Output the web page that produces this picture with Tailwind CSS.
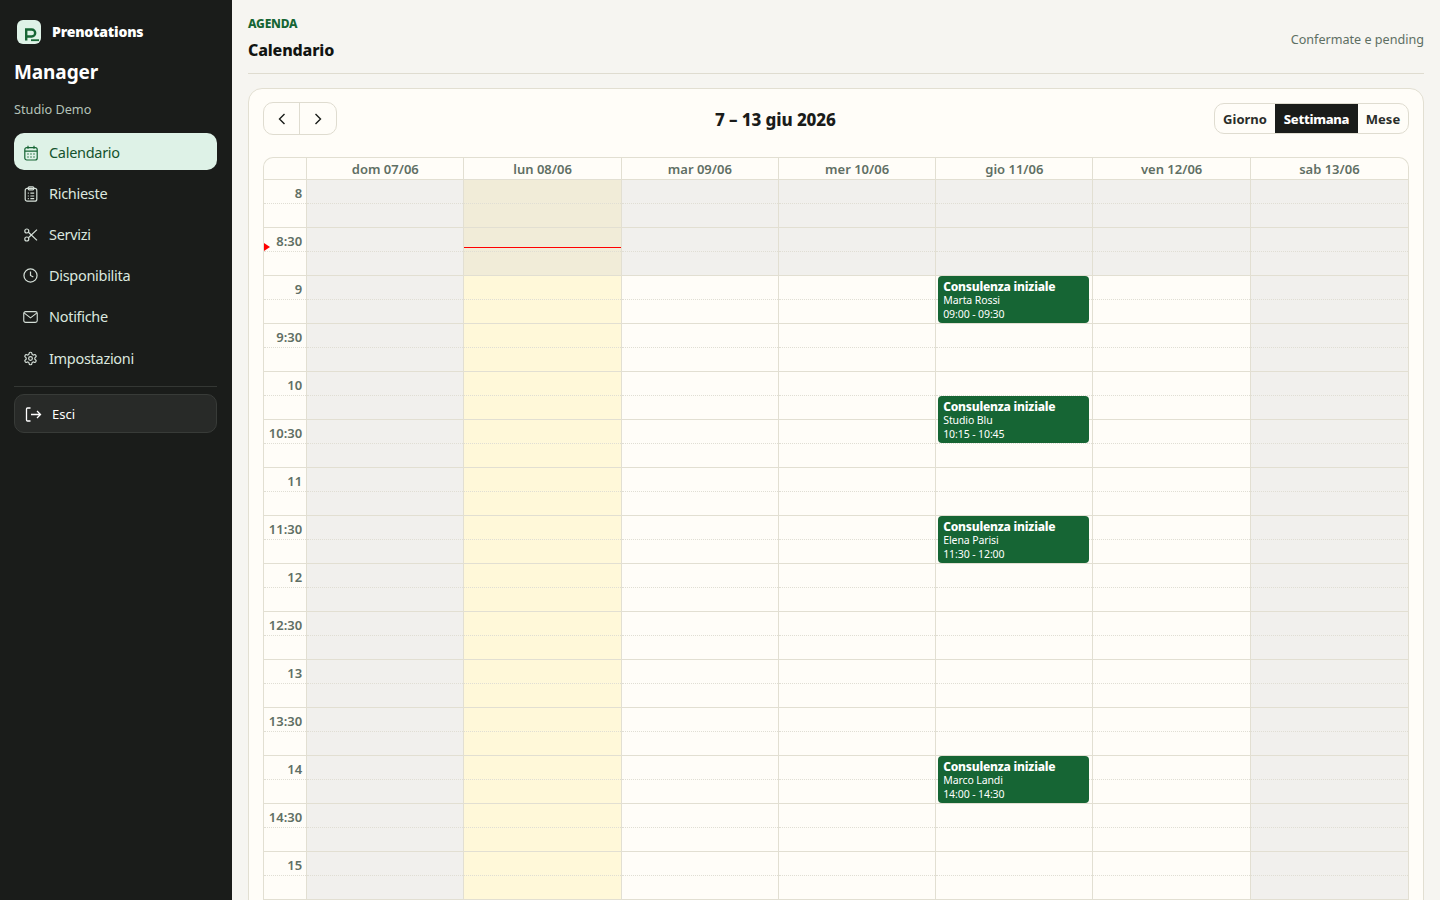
<!DOCTYPE html>
<html lang="en">
<head>
  <meta charset="UTF-8" />
  <meta name="viewport" content="width=device-width, initial-scale=1.0"/>
  <title>Calendario</title>
  <script src="https://cdn.jsdelivr.net/npm/@tailwindcss/browser@4"></script>
</head>

<body class="h-screen overflow-hidden flex bg-[#f6f5f1] font-['Noto_Sans',sans-serif]">
  <!-- Sidebar -->
  <aside class="w-[232px] shrink-0 bg-[#1a1c1a] pl-[14px] pr-[15px] pt-[19px]">
    <div class="flex items-center gap-[11px] pl-[3px] h-[25px]">
      <svg class="w-[24px] h-[24px]" viewBox="0 0 24 24">
        <rect width="24" height="24" rx="6" fill="#def2e7"/>
        <path d="M9.200 20.500V9.500h5.500a3.500 3.500 0 0 1 0 7H9.200" fill="none" stroke="#166534" stroke-width="2.400"/>
        <path d="M14 20.200h8" stroke="#166534" stroke-width="1.800"/>
      </svg>
      <span class="text-[14px] font-black tracking-[-0.2px] text-white">Prenotations</span>
    </div>
    <div class="mt-[13px] text-[19px] leading-[30px] font-bold tracking-[-0.1px] text-white">Manager</div>
    <div class="mt-[13px] text-[12.700px] leading-[18px] text-[#b4c2b8]">Studio Demo</div>

    <nav class="mt-[15px] flex flex-col gap-[4px] text-[14.500px] tracking-[-0.3px]">
      <a class="h-[37px] pt-[2px] flex items-center gap-[11px] pl-[10px] rounded-[10px] bg-[#def2e7] text-[#14532d]">
        <svg class="w-[14px] h-[16px]" viewBox="0 0 14 16" fill="none" stroke="#166534" stroke-width="1.200"><rect x=".8" y="2.600" width="12.400" height="12.400" rx="2"/><path d="M.8 6.200h12.400M4 .8v3M10 .8v3"/><path d="M3.500 9h1M6.500 9h1M9.500 9h1M3.500 12h1M6.500 12h1M9.500 12h1" stroke-width="1.300"/></svg>
        Calendario
      </a>
      <a class="h-[37px] pt-[2px] flex items-center gap-[11px] pl-[10px] rounded-[10px] text-[#dbe7df]">
        <svg class="w-[14px] h-[16px]" viewBox="0 0 14 16" fill="none" stroke="#d5dfd8" stroke-width="1.200"><rect x="1.200" y="2.400" width="11.600" height="12.800" rx="2"/><rect x="4.200" y=".8" width="5.600" height="3" rx="1"/><path d="M3.800 7.200h1M6.400 7.200h3.800M3.800 10h1M6.400 10h3.800M3.800 12.600h1M6.400 12.600h3.800"/></svg>
        Richieste
      </a>
      <a class="h-[37px] pt-[2px] flex items-center gap-[11px] pl-[10px] rounded-[10px] text-[#dbe7df]">
        <svg class="w-[14px] h-[14px]" viewBox="0 0 14 14" fill="none" stroke="#d5dfd8" stroke-width="1.200"><circle cx="2.800" cy="3" r="2"/><circle cx="2.800" cy="11" r="2"/><path d="M4.400 4.200 13 12.400M4.400 9.800 13 1.600"/></svg>
        Servizi
      </a>
      <a class="h-[37px] pt-[2px] flex items-center gap-[11px] pl-[9px] rounded-[10px] text-[#dbe7df]">
        <svg class="w-[15px] h-[15px]" viewBox="0 0 16 16" fill="none" stroke="#d5dfd8" stroke-width="1.300"><circle cx="8" cy="8" r="7"/><path d="M8 3.800V8l3 1.600"/></svg>
        Disponibilita
      </a>
      <a class="h-[37px] pt-[2px] flex items-center gap-[11px] pl-[9px] rounded-[10px] text-[#dbe7df]">
        <svg class="w-[15px] h-[12px]" viewBox="0 0 16 13" fill="none" stroke="#d5dfd8" stroke-width="1.200"><rect x=".7" y=".7" width="14.600" height="11.600" rx="2"/><path d="m1 2 7 5.400L15 2"/></svg>
        Notifiche
      </a>
      <a class="h-[37px] pt-[2px] mt-[1px] flex items-center gap-[11px] pl-[9px] rounded-[10px] text-[#dbe7df]">
        <svg class="w-[15px] h-[15px]" viewBox="0 0 24 24" fill="none" stroke="#d5dfd8" stroke-width="1.900"><path d="M12.220 2h-.44a2 2 0 0 0-2 2v.18a2 2 0 0 1-1 1.730l-.43.25a2 2 0 0 1-2 0l-.15-.08a2 2 0 0 0-2.730.73l-.22.38a2 2 0 0 0 .73 2.730l.15.1a2 2 0 0 1 1 1.720v.51a2 2 0 0 1-1 1.740l-.15.09a2 2 0 0 0-.73 2.730l.22.38a2 2 0 0 0 2.730.73l.15-.08a2 2 0 0 1 2 0l.43.25a2 2 0 0 1 1 1.730V20a2 2 0 0 0 2 2h.44a2 2 0 0 0 2-2v-.18a2 2 0 0 1 1-1.730l.43-.25a2 2 0 0 1 2 0l.15.08a2 2 0 0 0 2.730-.73l.22-.39a2 2 0 0 0-.73-2.730l-.15-.08a2 2 0 0 1-1-1.740v-.5a2 2 0 0 1 1-1.740l.15-.09a2 2 0 0 0 .73-2.730l-.22-.38a2 2 0 0 0-2.730-.73l-.15.08a2 2 0 0 1-2 0l-.43-.25a2 2 0 0 1-1-1.730V4a2 2 0 0 0-2-2z"/><circle cx="12" cy="12" r="3"/></svg>
        Impostazioni
      </a>
    </nav>

    <div class="mt-[10px] border-t border-[#343734] pt-[7px]">
      <button class="w-full h-[39px] pt-[3px] flex items-center gap-[10px] pl-[10px] rounded-[10px] border border-[#383b38] bg-[#282a28] text-white text-[13px]">
        <svg class="w-[17px] h-[15px] -mt-[2px]" viewBox="0 0 16 15" fill="none" stroke="#fff" stroke-width="1.300"><path d="M5 1H2a1 1 0 0 0-1 1v11a1 1 0 0 0 1 1h3M5.500 7.500h9.500M11.500 4l3.500 3.500-3.500 3.500"/></svg>
        Esci
      </button>
    </div>
  </aside>

  <!-- Main -->
  <main class="flex-1 min-w-0 px-[16px]">
    <header class="h-[74px] border-b border-[#dfdcd0] flex items-end justify-between">
      <div class="pb-[12px]">
        <div class="text-[12px] leading-[16px] font-extrabold tracking-[-0.2px] text-[#166534]">AGENDA</div>
        <h1 class="mt-[7px] text-[16px] leading-[22px] font-extrabold tracking-[-0.15px] text-[#111411]">Calendario</h1>
      </div>
      <span class="pb-[24px] text-[12.600px] leading-[18px] text-[#5d6f63]">Confermate e pending</span>
    </header>

    <section class="mt-[14px] bg-[#fffdf8] border border-[#e2dfd2] rounded-[14px] px-[14px] pt-[13px] pb-[16px]">
      <div class="h-[33px] flex items-center justify-between relative">
        <div class="flex h-[33px] border border-[#dfdcd0] rounded-[10px] bg-[#fffdf8]">
          <button class="w-[36px] flex items-center justify-center border-r border-[#dfdcd0]">
            <svg class="w-[8px] h-[12px]" viewBox="0 0 8 12" fill="none" stroke="#1a1c1a" stroke-width="1.400"><path d="M6.500 1 1.500 6l5 5"/></svg>
          </button>
          <button class="w-[36px] flex items-center justify-center">
            <svg class="w-[8px] h-[12px]" viewBox="0 0 8 12" fill="none" stroke="#1a1c1a" stroke-width="1.400"><path d="m1.500 1 5 5-5 5"/></svg>
          </button>
        </div>
        <h2 class="absolute left-[452px] top-[6px] text-[17px] leading-[24px] font-extrabold tracking-[-0.1px] text-[#1a1c1a]">7 – 13 giu 2026</h2>
        <div class="flex h-[31px] border border-[#dfdcd0] rounded-[10px] overflow-hidden text-[13px] font-bold text-[#2a2d2a]">
          <button class="w-[60px] pt-[2px]">Giorno</button>
          <button class="w-[83px] pt-[2px] bg-[#1a1c1a] text-white font-extrabold tracking-[-0.3px]">Settimana</button>
          <button class="w-[50px] pt-[2px]">Mese</button>
        </div>
      </div>

      <div id="grid" class="mt-[22px] border-l border-t border-r border-[#e2dfd2] rounded-t-[10px] grid grid-cols-[43.2px_repeat(7,1fr)] text-[13px] font-semibold text-[#5f6f64] overflow-hidden"></div>
    </section>
  </main>

  <script>
    const days = ["dom 07/06", "lun 08/06", "mar 09/06", "mer 10/06", "gio 11/06", "ven 12/06", "sab 13/06"];
    const hours = ["8","8:30","9","9:30","10","10:30","11","11:30","12","12:30","13","13:30","14","14:30","15"];
    const events = [
      { top: 96, name: "Marta Rossi", time: "09:00 - 09:30" },
      { top: 216, name: "Studio Blu", time: "10:15 - 10:45" },
      { top: 336, name: "Elena Parisi", time: "11:30 - 12:00" },
      { top: 576, name: "Marco Landi", time: "14:00 - 14:30" }
    ];
    const grid = document.getElementById("grid");

    let html = '<div class="h-[22px] border-b border-r border-[#e2dfd2]"></div>';
    days.forEach((d, i) => {
      html += `<div class="h-[22px] leading-[23px] text-center border-b border-[#e2dfd2] ${i < 6 ? "border-r" : ""}">${d}</div>`;
    });

    // time labels
    html += '<div class="border-r border-[#e2dfd2]">';
    hours.forEach(h => {
      html += `<div class="h-[24px] pr-[4px] pt-[3px] text-right leading-[20px] border-b border-dotted border-[#e0ded4]">${h}</div><div class="h-[24px] border-b border-[#e2dfd2]"></div>`;
    });
    html += "</div>";

    // day columns
    days.forEach((d, i) => {
      html += `<div class="relative ${i < 6 ? "border-r border-[#e2dfd2]" : ""}">`;
      hours.forEach((h, r) => {
        let bg = "bg-[#fffdf8]";
        if (i === 0 || i === 6 || (r < 2 && i !== 1)) bg = "bg-[#f1f0ed]";
        else if (i === 1) bg = r < 2 ? "bg-[#f1ecd8]" : "bg-[#fff8d9]";
        html += `<div class="h-[24px] border-b border-dotted border-[#e0ded4] ${bg}"></div><div class="h-[24px] border-b border-[#e2dfd2] ${bg}"></div>`;
      });
      if (i === 1) html += '<div class="absolute left-0 right-0 top-[67px] h-px bg-[#ff0000]"></div>';
      if (i === 4) {
        events.forEach(e => {
          html += `<div class="absolute left-[2px] right-[3.600px] h-[47px] rounded-[4px] bg-[#166534] text-white px-[5px] pt-[4px] text-[10.500px] leading-[14px] font-normal tracking-[-0.1px]" style="top:${e.top}px"><div class="text-[12px] leading-[13px] font-extrabold tracking-[-0.2px] whitespace-nowrap">Consulenza iniziale</div><div>${e.name}</div><div>${e.time}</div></div>`;
        });
      }
      html += "</div>";
    });
    grid.innerHTML = html;
  </script>
  <!-- now marker -->
  <div class="absolute left-[264px] top-[243px] w-0 h-0 border-y-[4px] border-y-transparent border-l-[6px] border-l-[#ff0000]"></div>
</body>
</html>
